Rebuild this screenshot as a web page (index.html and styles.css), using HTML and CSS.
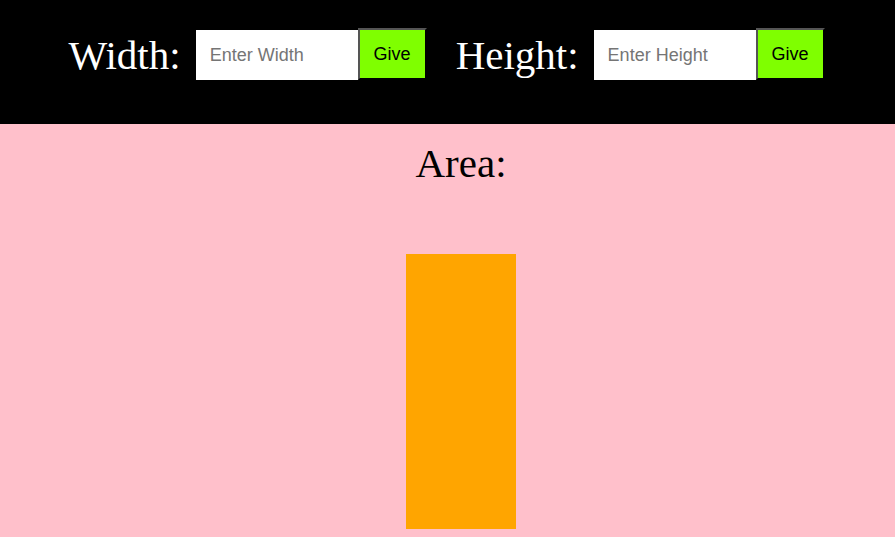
FILE: index.html
```html
<!DOCTYPE html>
<html>
<head>
<meta charset="utf-8">
<link rel="stylesheet" href="styles.css">
</head>
<body>
<header class="bar">
  <div class="field">
    <span class="label">Width:</span>
    <input class="entry" type="text" placeholder="Enter Width">
    <button class="give">Give</button>
  </div>
  <div class="field">
    <span class="label">Height:</span>
    <input class="entry" type="text" placeholder="Enter Height">
    <button class="give">Give</button>
  </div>
</header>
<main class="stage">
  <div class="area">Area:</div>
  <div class="rect"></div>
</main>
</body>
</html>
```

FILE: styles.css
```css
html, body {
  margin: 0;
  padding: 0;
  height: 100%;
  overflow: hidden;
}
body {
  background: #ffc0cb;
  font-family: "Liberation Serif", "Times New Roman", serif;
}
.bar {
  background: #000;
  height: 124px;
  display: flex;
  align-items: center;
  justify-content: center;
  gap: 29px;
  padding-bottom: 14px;
  padding-right: 2px;
  box-sizing: border-box;
}
.field {
  display: flex;
  align-items: center;
}
.label {
  color: #fff;
  font-size: 41px;
  line-height: 46px;
  margin-right: 15px;
}
.entry {
  width: 162px;
  height: 50px;
  box-sizing: border-box;
  border: none;
  outline: none;
  padding: 0 0 0 14px;
  font-family: "Liberation Sans", Arial, sans-serif;
  font-size: 18px;
  color: #000;
  background: #fff;
  margin: 0;
}
.entry::placeholder {
  color: #757575;
}
.give {
  width: 69px;
  height: 52px;
  box-sizing: border-box;
  margin: -2px 0 0 0;
  background: #7fff00;
  border-style: solid;
  border-width: 2px;
  border-color: #555 #000 #000 #555;
  font-family: "Liberation Sans", Arial, sans-serif;
  font-size: 18px;
  color: #000;
  padding: 0;
}
.stage {
  display: flex;
  flex-direction: column;
  align-items: center;
  padding-left: 27px;
  padding-top: 16px;
}
.area {
  font-size: 41px;
  line-height: 46px;
  color: #000;
}
.rect {
  margin-top: 68px;
  width: 110px;
  height: 275px;
  background: #ffa500;
}
```
